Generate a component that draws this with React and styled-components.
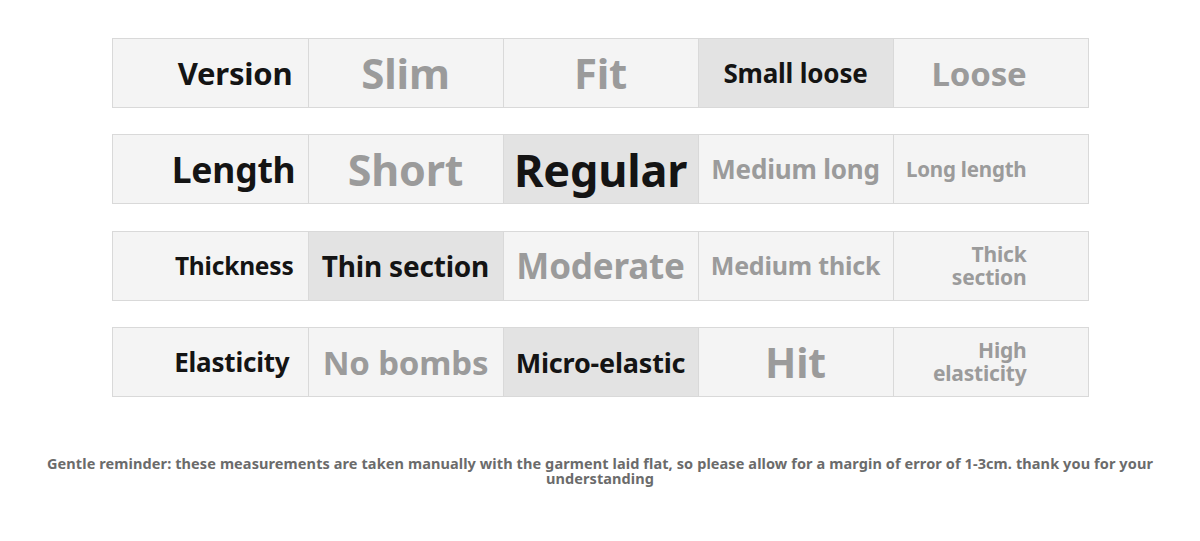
import styled, { createGlobalStyle } from 'styled-components';

const GlobalStyle = createGlobalStyle`
  html, body {
    margin: 0;
    padding: 0;
    background: #ffffff;
  }
  body {
    font-family: 'Noto Sans', 'Open Sans', sans-serif;
  }
`;

const Page = styled.div`
  width: 1200px;
  height: 541px;
  padding-top: 38px;
  box-sizing: border-box;
  display: flex;
  flex-direction: column;
  align-items: center;
`;

const Table = styled.div`
  display: flex;
  flex-direction: column;
  gap: 26.4px;
`;

const Row = styled.div`
  display: grid;
  grid-template-columns: repeat(5, 195px);
  height: 70px;
  border: 1px solid #d9d9d9;
  box-sizing: border-box;
  background: #f4f4f4;
`;

const Cell = styled.div`
  display: flex;
  flex-direction: column;
  justify-content: center;
  align-items: ${(p) => (p.align === 'right' ? 'flex-end' : 'center')};
  text-align: ${(p) => (p.align === 'right' ? 'right' : 'center')};
  padding-right: ${(p) => (p.align === 'right' ? `${p.padRight}px` : '0')};
  background: ${(p) => (p.selected ? '#e3e3e3' : '#f4f4f4')};
  border-left: ${(p) => (p.first ? 'none' : '1px solid #d9d9d9')};
  color: ${(p) => (p.dark ? '#141414' : '#9b9b9b')};
  font-size: ${(p) => p.size}px;
  font-weight: 700;
  line-height: 1;
  white-space: nowrap;
  letter-spacing: -0.2px;
`;

const Line = styled.span`
  display: block;
  height: 23px;
  line-height: 23px;
`;

const Reminder = styled.p`
  margin: 59px 0 0;
  width: 1120px;
  text-align: center;
  color: #6b6b6b;
  font-size: 14.5px;
  font-weight: 700;
  line-height: 15px;
  letter-spacing: 0.1px;
`;

const rows = [
  {
    label: 'Version',
    labelSize: 31,
    padRight: 15,
    values: [
      { text: 'Slim', size: 42 },
      { text: 'Fit', size: 42 },
      { text: 'Small loose', size: 26, selected: true },
      { text: 'Loose', size: 33 },
    ],
  },
  {
    label: 'Length',
    labelSize: 35.5,
    padRight: 12,
    values: [
      { text: 'Short', size: 43 },
      { text: 'Regular', size: 45, selected: true },
      { text: 'Medium long', size: 26 },
      { text: 'Long length', size: 20.5 },
    ],
  },
  {
    label: 'Thickness',
    labelSize: 24.5,
    padRight: 14,
    values: [
      { text: 'Thin section', size: 28, selected: true },
      { text: 'Moderate', size: 35 },
      { text: 'Medium thick', size: 25 },
      { text: ['Thick', 'section'], size: 21 },
    ],
  },
  {
    label: 'Elasticity',
    labelSize: 26,
    padRight: 18,
    values: [
      { text: 'No bombs', size: 33 },
      { text: 'Micro-elastic', size: 27, selected: true },
      { text: 'Hit', size: 41 },
      { text: ['High', 'elasticity'], size: 21 },
    ],
  },
];

function AttributeRow({ label, labelSize, padRight, values }) {
  return (
    <Row>
      <Cell first dark align="right" padRight={padRight} size={labelSize}>
        {label}
      </Cell>
      {values.map((v, i) => {
        const last = i === values.length - 1;
        return (
          <Cell
            key={i}
            dark={v.selected}
            selected={v.selected}
            size={v.size}
            align={last ? 'right' : 'center'}
            padRight={61}
          >
            {Array.isArray(v.text)
              ? v.text.map((t) => <Line key={t}>{t}</Line>)
              : v.text}
          </Cell>
        );
      })}
    </Row>
  );
}

export default function App() {
  return (
    <>
      <GlobalStyle />
      <Page>
        <Table>
          {rows.map((r) => (
            <AttributeRow key={r.label} {...r} />
          ))}
        </Table>
        <Reminder>
          Gentle reminder: these measurements are taken manually with the garment laid flat,
          so please allow for a margin of error of 1-3cm. thank you for your understanding
        </Reminder>
      </Page>
    </>
  );
}
